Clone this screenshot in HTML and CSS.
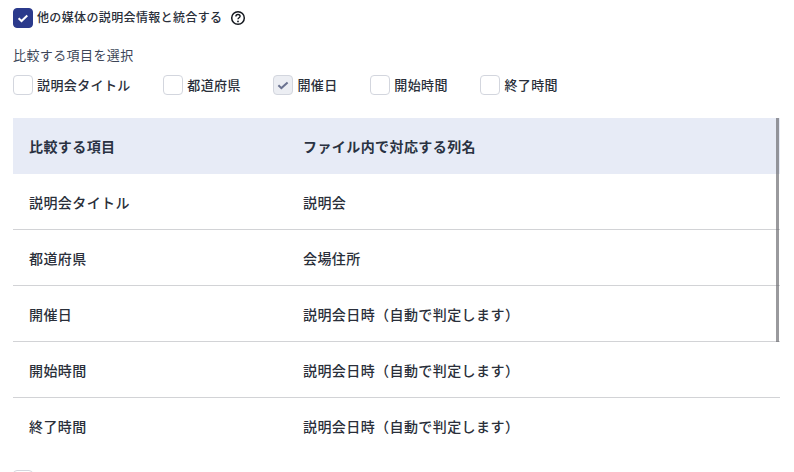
FILE: index.html
```html
<!DOCTYPE html>
<html lang="ja">
<head>
<meta charset="utf-8">
<title>比較する項目を選択</title>
<link rel="stylesheet" href="styles.css">
</head>
<body>
<main class="page">
  <div class="merge">
    <span class="box box-on"><svg width="14" height="14" viewBox="0 0 14 14"><path d="M2.6 7.2l2.9 2.8L11.3 4.6" fill="none" stroke="#fff" stroke-width="2"/></svg></span>
    <span class="merge-label">他の媒体の説明会情報と統合する</span>
    <svg class="help" width="16" height="16" viewBox="0 0 16 16"><circle cx="8" cy="8" r="6.3" fill="none" stroke="#14181f" stroke-width="1.5"/><path d="M5.9 6.4c0-1.2 1-1.9 2.1-1.9s2.1.7 2.1 1.8c0 1.5-2.1 1.5-2.1 3" fill="none" stroke="#14181f" stroke-width="1.4"/><circle cx="8" cy="11.4" r=".9" fill="#14181f"/></svg>
  </div>
  <div class="select-title">比較する項目を選択</div>
  <div class="options">
    <label class="option"><span class="box"></span><span>説明会タイトル</span></label>
    <label class="option"><span class="box"></span><span>都道府県</span></label>
    <label class="option"><span class="box box-disabled"><svg width="14" height="14" viewBox="0 0 14 14"><path d="M2.4 7.2l3 2.9L11.6 4.4" fill="none" stroke="#6b7390" stroke-width="2"/></svg></span><span>開催日</span></label>
    <label class="option"><span class="box"></span><span>開始時間</span></label>
    <label class="option"><span class="box"></span><span>終了時間</span></label>
  </div>
  <div class="table-wrap">
    <div class="row head"><div class="col-a">比較する項目</div><div>ファイル内で対応する列名</div></div>
    <div class="row"><div class="col-a">説明会タイトル</div><div>説明会</div></div>
    <div class="row"><div class="col-a">都道府県</div><div>会場住所</div></div>
    <div class="row"><div class="col-a">開催日</div><div>説明会日時（自動で判定します）</div></div>
    <div class="row"><div class="col-a">開始時間</div><div>説明会日時（自動で判定します）</div></div>
    <div class="row last"><div class="col-a">終了時間</div><div>説明会日時（自動で判定します）</div></div>
    <div class="scrollbar"></div>
  </div>
  <div class="box box-next"></div>
</main>
</body>
</html>
```
FILE: styles.css
```css
html, body {
  margin: 0;
  height: 100%;
  overflow: hidden;
  background: #fff;
}
body {
  font-family: Inter, "Noto Sans CJK JP", sans-serif;
  color: #2a2f3a;
}
.page {
  padding: 8px 14px 0 13px;
}
.box {
  box-sizing: border-box;
  width: 20px;
  height: 20px;
  flex: none;
  display: flex;
  align-items: center;
  justify-content: center;
  border: 1px solid #d3d6de;
  border-radius: 4px;
  background: #fff;
}
.box-on {
  background: #2b3a8c;
  border-color: #2b3a8c;
}
.box-disabled {
  background: #eceef3;
  border-color: #d3d6de;
}
.merge {
  display: flex;
  align-items: center;
  height: 20px;
}
.merge-label {
  margin-left: 4px;
  font-size: 12px;
  font-weight: 500;
  letter-spacing: 0.36px;
  line-height: 20px;
}
.help {
  margin-left: 8px;
}
.select-title {
  margin-top: 17px;
  font-size: 13px;
  letter-spacing: 0.4px;
  line-height: 20px;
  color: #3d4658;
}
.options {
  display: flex;
  gap: 32.6px;
  margin-top: 10px;
  height: 20px;
}
.option {
  display: flex;
  align-items: center;
  gap: 4px;
  font-size: 13px;
  font-weight: 500;
  letter-spacing: 0.39px;
  line-height: 20px;
}
.table-wrap {
  position: relative;
  margin-top: 23px;
}
.row {
  box-sizing: border-box;
  display: flex;
  align-items: center;
  height: 56px;
  padding-left: 16px;
  border-bottom: 1px solid #d2d3d6;
  font-size: 14px;
  font-weight: 500;
  letter-spacing: 0.42px;
}
.row.head {
  background: #e7ebf6;
  border-bottom: 0;
  font-weight: 700;
  color: #2a3242;
}
.row.last {
  border-bottom: 0;
}
.col-a {
  width: 274px;
  flex: none;
}
.scrollbar {
  position: absolute;
  top: 0;
  right: 1px;
  width: 3px;
  height: 224px;
  background: rgba(100, 100, 105, 0.65);
}
.box-next {
  margin-top: 16px;
}
```
